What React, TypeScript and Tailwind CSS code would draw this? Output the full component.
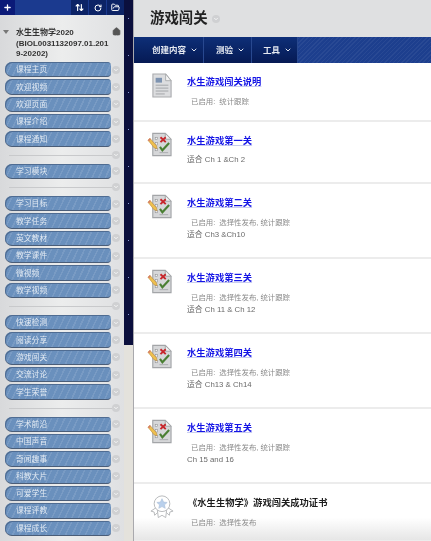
import { Plus, ArrowUpDown, RotateCw, FolderOpen, Home, ChevronDown } from "lucide-react";

const font = { fontFamily: '"Liberation Sans","Noto Sans CJK SC",sans-serif' };

type Row = { t: "b"; label: string } | { t: "s" };
const b = (label: string): Row => ({ t: "b", label });
const s: Row = { t: "s" };
const rows: Row[] = [
  b("课程主页"), b("欢迎视频"), b("欢迎页面"), b("课程介绍"), b("课程通知"), s,
  b("学习模块"), s,
  b("学习目标"), b("教学任务"), b("英文教材"), b("教学课件"), b("微视频"), b("教学视频"), s,
  b("快速检测"), b("阅读分享"), b("游戏闯关"), b("交流讨论"), b("学生荣誉"), s,
  b("学术前沿"), b("中国声音"), b("奇闻趣事"), b("科教大片"), b("可爱学生"), b("课程评教"), b("课程成长"),
];

function Dot() {
  return (
    <span className="flex h-[8px] w-[8px] shrink-0 items-center justify-center rounded-full bg-[#cfd0d2]">
      <ChevronDown size={6} strokeWidth={3} color="#ffffff" />
    </span>
  );
}

function DocIcon() {
  return (
    <svg width="20" height="25" viewBox="0 0 22 26" className="shrink-0" preserveAspectRatio="none">
      <path d="M1 1H15L21 8V25H1Z" fill="#dcdddf" stroke="#a9abae" strokeWidth="1.2" />
      <path d="M15 1V8H21Z" fill="#f4f4f4" stroke="#a9abae" />
      <rect x="4" y="5" width="7" height="5" fill="#7d93b0" />
      <rect x="4" y="12" width="14" height="1.5" fill="#b5b7ba" />
      <rect x="4" y="15" width="14" height="1.5" fill="#b5b7ba" />
      <rect x="4" y="18" width="14" height="1.5" fill="#b5b7ba" />
      <rect x="4" y="21" width="10" height="1.5" fill="#b5b7ba" />
    </svg>
  );
}

function QuizIcon() {
  return (
    <svg width="25" height="25" viewBox="0 0 26 25" className="shrink-0">
      <path d="M6 1H19L25 7V24H6Z" fill="#d6d7d9" stroke="#a3a5a8" strokeWidth="1.2" />
      <path d="M19 1V7H25Z" fill="#f3f3f3" stroke="#a3a5a8" />
      <rect x="8.5" y="5" width="2.5" height="2.5" fill="#f2f2f2" stroke="#8d8f92" strokeWidth="0.6" />
      <rect x="8.5" y="10.5" width="2.5" height="2.5" fill="#f2f2f2" stroke="#8d8f92" strokeWidth="0.6" />
      <rect x="8.5" y="16.5" width="2.5" height="2.5" fill="#f2f2f2" stroke="#8d8f92" strokeWidth="0.6" />
      <path d="M14 5L19.5 10M19.5 5L14 10" stroke="#c7272c" strokeWidth="2" />
      <path d="M13.5 15L16 18.5L23 11" stroke="#4a7f33" strokeWidth="2.2" fill="none" />
      <rect x="13" y="20.5" width="9" height="1" fill="#a9abae" />
      <path d="M1 8L3 6L10 14L10.5 17L7.5 16Z" fill="#eec04f" stroke="#b9863a" strokeWidth="0.6" />
      <path d="M1 8L3 6L4 7L2 9Z" fill="#d9796a" />
    </svg>
  );
}

function AwardIcon() {
  return (
    <svg width="24" height="25" viewBox="0 0 26 26" className="mr-[-2px] shrink-0" fill="#ffffff" stroke="#b4b6b9" strokeWidth="1">
      <path d="M7 14L1 18L4.5 19L5 22.5L10 18Z" />
      <path d="M19 14L25 18L21.5 19L21 22.5L16 18Z" />
      <path d="M8 17L9 25L13 22.5L17 25L18 17Z" />
      <circle cx="13" cy="10" r="8.5" />
      <path d="M13 4.5L14.7 8.2L18.6 8.6L15.7 11.2L16.5 15L13 13.1L9.5 15L10.3 11.2L7.4 8.6L11.3 8.2Z" fill="#b9d0ec" stroke="#a7bcd6" strokeWidth="0.6" />
    </svg>
  );
}

function Item({
  h,
  icon,
  title,
  link = true,
  meta,
  desc,
  last,
}: {
  h: number;
  icon: React.ReactNode;
  title: string;
  link?: boolean;
  meta?: string;
  desc?: string;
  last?: boolean;
}) {
  return (
    <div
      style={{ height: h }}
      className={`flex shrink-0 items-start border-b-2 border-[#ececec] pt-[10px] ${last ? "bg-gradient-to-b from-white from-60% to-[#e6e6e6]" : "bg-white"}`}
    >
      <div className="flex w-[53px] shrink-0 justify-end pr-[15px]">{icon}</div>
      <div className="min-w-0 pt-[3px]">
        <div className={`text-[9.3px] font-bold leading-[12px] ${link ? "text-[#1414e6] underline decoration-[#c9cdf0]" : "ml-[1px] text-[#1c1c1c]"}`}>
          {title}
        </div>
        {meta && <div className="mt-[9px] pl-[4px] text-[7.4px] leading-[10px] text-[#8a8a8a]">{meta}</div>}
        {desc && <div className={`${meta ? "mt-[2px]" : "mt-[8px]"} text-[7.8px] leading-[10px] text-[#6a6a6a]`}>{desc}</div>}
      </div>
    </div>
  );
}

export default function App() {
  const m = "已启用:\u00a0\u00a0选择性发布, 统计跟踪";
  const nav: [string, number, number][] = [
    ["创建内容", 70, 18],
    ["测验", 48, 12],
    ["工具", 46, 11],
  ];
  return (
    <div style={font} className="flex h-[541px] w-[431px] overflow-hidden bg-white blur-[0.4px]">
      {/* course menu */}
      <aside className="flex w-[124px] shrink-0 flex-col bg-gradient-to-r from-[#d8d9db] via-[#eceded] to-[#dfe0e2]">
        <div className="flex h-[15px] shrink-0 bg-[#1b3a8f] text-white">
          <div className="flex w-[15px] items-center justify-center bg-[#0b1a78]">
            <Plus size={9} strokeWidth={3.5} />
          </div>
          <div className="flex-1" />
          <div className="flex w-[18px] items-center justify-center border-r border-[#1b3a8f] bg-[#0c2366]">
            <ArrowUpDown size={9} strokeWidth={3} />
          </div>
          <div className="flex w-[18px] items-center justify-center border-r border-[#1b3a8f] bg-[#0c2366]">
            <RotateCw size={8} strokeWidth={3} />
          </div>
          <div className="flex w-[17px] items-center justify-center bg-[#0c2366]">
            <FolderOpen size={9} strokeWidth={2.5} />
          </div>
        </div>
        <div className="relative h-[47px] shrink-0 pl-[16px] pt-[13px] text-[8px] font-bold leading-[10.5px] text-[#333]">
          <span className="absolute left-[3px] top-[15px] h-0 w-0 border-x-[3px] border-t-[4px] border-x-transparent border-t-[#777]" />
          <Home size={9} fill="#555" color="#555" className="absolute right-[3px] top-[12px]" />
          <div>水生生物学2020</div>
          <div>(BIOL0031132097.01.201</div>
          <div>9-20202)</div>
        </div>
        <nav className="flex flex-col gap-[2px] pl-[5px]">
          {rows.map((r, i) =>
            r.t === "s" ? (
              <div key={i} className="flex h-[13px] items-center pl-[4px] pr-[4px]">
                <div className="h-px flex-1 bg-[#c8c9cb]" />
                <Dot />
              </div>
            ) : (
              <div key={i} className="flex h-[15.33px] items-center gap-[1px] pr-[4px]">
                <div className="flex h-full flex-1 items-center rounded-l-[7px] rounded-r-[4px] border-b-[1.5px] border-[#4a5d78] bg-[#6a90bd] bg-[repeating-linear-gradient(115deg,rgba(255,255,255,0.1)_0_1.5px,rgba(255,255,255,0)_1.5px_6px)] pl-[11px] pt-[2px] text-[7.8px] leading-none text-[#e2eaf3] shadow-[inset_1px_1px_0_#4f6c92]">
                  {r.label}
                </div>
                <Dot />
              </div>
            ),
          )}
        </nav>
      </aside>

      {/* backdrop strip */}
      <div className="flex w-[9px] shrink-0 flex-col">
        <div className="h-[345px] bg-[#0b0f3d] bg-[radial-gradient(circle,#8ea0d8_0_0.6px,transparent_1px)] bg-[length:9px_37px]" />
        <div className="flex-1 bg-[#e4e2dc]" />
      </div>

      {/* content */}
      <main className="flex min-w-0 flex-1 flex-col border-l border-[#a9a9ad]">
        <header className="flex h-[37px] shrink-0 items-center gap-[4px] bg-[#dfe0e1] pl-[16px]">
          <h1 className="text-[14.4px] font-bold text-[#222]">游戏闯关</h1>
          <Dot />
        </header>
        <div className="flex h-[26px] shrink-0 bg-[#1d3f8e] bg-[repeating-linear-gradient(135deg,rgba(255,255,255,0.05)_0_1px,transparent_1px_3px)]">
          {nav.map(([l, w, p]) => (
            <div
              key={l}
              style={{ width: w, paddingLeft: p }}
              className="flex items-center gap-[4px] border-r border-[#28488f] bg-gradient-to-b from-[#0e2f78] to-[#061a54] text-[8.5px] font-bold text-[#e4e8f0]"
            >
              {l}
              <ChevronDown size={8} strokeWidth={3} />
            </div>
          ))}
        </div>
        <Item h={59} icon={<DocIcon />} title="水生游戏闯关说明" meta={"已启用:\u00a0\u00a0统计跟踪"} />
        <Item h={62} icon={<QuizIcon />} title="水生游戏第一关" desc="适合 Ch 1 &Ch 2" />
        <Item h={75} icon={<QuizIcon />} title="水生游戏第二关" meta={m} desc="适合 Ch3 &Ch10" />
        <Item h={75} icon={<QuizIcon />} title="水生游戏第三关" meta={m} desc="适合 Ch 11 & Ch 12" />
        <Item h={75} icon={<QuizIcon />} title="水生游戏第四关" meta={m} desc="适合 Ch13 & Ch14" />
        <Item h={75} icon={<QuizIcon />} title="水生游戏第五关" meta={m} desc="Ch 15 and 16" />
        <Item h={58} icon={<AwardIcon />} title="《水生生物学》游戏闯关成功证书" link={false} meta={"已启用:\u00a0\u00a0选择性发布"} last />
      </main>
    </div>
  );
}
